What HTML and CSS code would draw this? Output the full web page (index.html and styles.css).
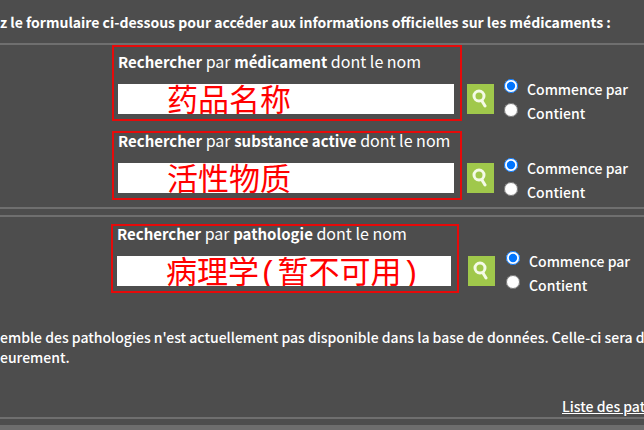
FILE: index.html
```html
<!DOCTYPE html>
<html lang="fr">
<head>
    <meta charset="UTF-8">
    <meta name="viewport" content="width=device-width, initial-scale=1.0">
    <title>Recherche de médicaments</title>
    <link rel="stylesheet" href="styles.css">
</head>
<body>
    <main class="page">
        <h1 class="intro">z le formulaire ci-dessous pour accéder aux informations officielles sur les médicaments :</h1>

        <!-- Médicament et substance active -->
        <form class="panel">
            <div class="search-row first">
                <div class="field">
                    <label for="medicament"><b>Rechercher</b> par <b>médicament</b> dont le nom</label>
                    <input class="text" type="text" id="medicament" value="药品名称">
                </div>
                <button class="search" type="button" aria-label="Rechercher">
                    <svg viewBox="0 0 27 30"><circle cx="12" cy="12" r="5"/><path d="M15 17l3 5"/></svg>
                </button>
                <div class="modes">
                    <label><input type="radio" name="mode-medicament" checked><span>Commence par</span></label>
                    <label><input type="radio" name="mode-medicament"><span>Contient</span></label>
                </div>
            </div>
            <div class="search-row">
                <div class="field">
                    <label for="substance"><b>Rechercher</b> par <b>substance active</b> dont le nom</label>
                    <input class="text" type="text" id="substance" value="活性物质">
                </div>
                <button class="search" type="button" aria-label="Rechercher">
                    <svg viewBox="0 0 27 30"><circle cx="12" cy="12" r="5"/><path d="M15 17l3 5"/></svg>
                </button>
                <div class="modes">
                    <label><input type="radio" name="mode-substance" checked><span>Commence par</span></label>
                    <label><input type="radio" name="mode-substance"><span>Contient</span></label>
                </div>
            </div>
        </form>

        <!-- Pathologie -->
        <form class="panel pathology">
            <div class="search-row">
                <div class="field">
                    <label for="pathologie"><b>Rechercher</b> par <b>pathologie</b> dont le nom</label>
                    <input class="text" type="text" id="pathologie" value="病理学(暂不可用)">
                </div>
                <button class="search" type="button" aria-label="Rechercher">
                    <svg viewBox="0 0 27 30"><circle cx="12" cy="12" r="5"/><path d="M15 17l3 5"/></svg>
                </button>
                <div class="modes">
                    <label><input type="radio" name="mode-pathologie" checked><span>Commence par</span></label>
                    <label><input type="radio" name="mode-pathologie"><span>Contient</span></label>
                </div>
            </div>
            <p class="notice">emble des pathologies n'est actuellement pas disponible dans la base de données. Celle-ci sera d<br>eurement.</p>
            <div class="more"><a href="#">Liste des pat</a></div>
        </form>
    </main>
</body>
</html>
```

FILE: styles.css
```css
* {
    box-sizing: border-box;
}
body {
    margin: 0;
    min-height: 100vh;
    background: #6d6d6d;
    color: #fff;
    font-family: "Noto Sans CJK SC", sans-serif;
    font-size: 14px;
    font-weight: 500;
    line-height: 20px;
    overflow: hidden;
}
.page {
    background: #4d4d4d;
    padding: 12px 0 6px;
}
.intro {
    margin: 0 0 11px;
    font-size: 14px;
    line-height: 20px;
    white-space: nowrap;
}
.panel {
    border-top: 2px solid #6f6f6f;
    border-bottom: 2px solid #6f6f6f;
    margin-bottom: 6px;
}
.panel:last-child {
    margin-bottom: 0;
}
.search-row {
    display: flex;
    align-items: flex-end;
    gap: 5px;
    padding-left: 112px;
    margin-bottom: 7px;
}
.field {
    flex: 1;
    min-width: 0;
    border: 2px solid #e60a0a;
    padding: 0 6px 5px 4px;
}
.first .field {
    padding-top: 7px;
}
.first {
    margin-bottom: 10px;
}
.field label {
    display: block;
    height: 14px;
    font-size: 16px;
    font-weight: 400;
    line-height: 14px;
    margin-bottom: 16px;
    white-space: nowrap;
}
.field b {
    font-size: 15px;
}
.text {
    display: block;
    width: 100%;
    height: 30px;
    border: 0;
    padding: 0 0 4px 49px;
    background: #fff;
    color: #f00;
    font-family: "Liberation Mono", "Noto Sans CJK SC", monospace;
    font-size: 31px;
    line-height: 30px;
}
.search {
    flex: none;
    width: 27px;
    height: 30px;
    margin-bottom: 7px;
    border: 0;
    padding: 0;
    background: #a0c84b;
}
.search svg {
    display: block;
    width: 100%;
    height: 100%;
    fill: none;
    stroke: #f4fae6;
    stroke-width: 3;
    stroke-linecap: round;
}
.modes {
    display: flex;
    flex-direction: column;
    flex: none;
    gap: 6px;
    width: 145px;
    padding-left: 5px;
}
.modes label {
    display: flex;
    align-items: flex-start;
    gap: 9px;
    height: 18px;
}
.modes input {
    width: 14px;
    height: 14px;
    margin: 0;
    accent-color: #0075ff;
}
.pathology .search-row {
    padding: 7px 0 0 111px;
    gap: 9px;
    margin-bottom: 34px;
}
.pathology .modes {
    width: 140px;
    padding-left: 2px;
}
.notice {
    margin: 0;
    white-space: nowrap;
}
.more {
    margin-top: 29px;
    padding: 0 0 1px 562px;
    white-space: nowrap;
}
.more a {
    color: #fff;
}
```
